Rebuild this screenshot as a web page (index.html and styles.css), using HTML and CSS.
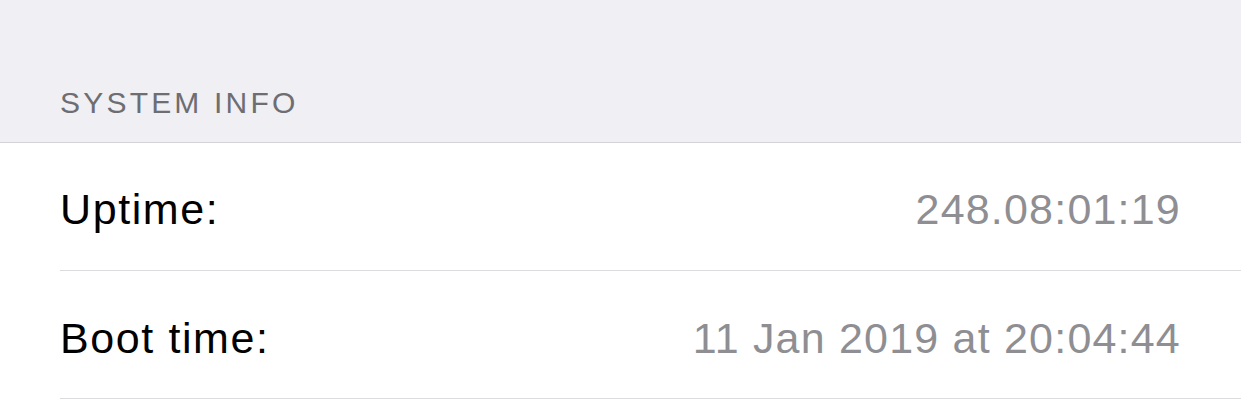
FILE: index.html
```html
<!DOCTYPE html>
<html lang="en">
<head>
<meta charset="utf-8">
<title>System Info</title>
<link rel="stylesheet" href="styles.css">
</head>
<body>
<div class="screen">
  <header class="section-header">
    <span class="section-title">SYSTEM INFO</span>
  </header>
  <ul class="list">
    <li class="row">
      <span class="label">Uptime:</span>
      <span class="value">248.08:01:19</span>
    </li>
    <li class="row">
      <span class="label">Boot time:</span>
      <span class="value">11 Jan 2019 at 20:04:44</span>
    </li>
  </ul>
</div>
</body>
</html>
```
FILE: styles.css
```css
html, body {
  margin: 0;
  padding: 0;
  background: #ffffff;
}

body {
  font-family: "Liberation Sans", Arial, sans-serif;
  width: 1241px;
  height: 404px;
  overflow: hidden;
}

.screen {
  display: flex;
  flex-direction: column;
}

.section-header {
  background: #efeff4;
  border-bottom: 1px solid #d3d3d8;
  display: flex;
  align-items: flex-end;
  padding: 0 0 22px 60px;
  box-sizing: content-box;
  height: 120px;
}

.section-title {
  font-size: 30px;
  letter-spacing: 3.2px;
  color: #6d6d72;
}

.list {
  list-style: none;
  margin: 0 0 0 60px;
  padding: 0;
}

.row {
  border-bottom: 1px solid #dcdcdf;
  display: flex;
  align-items: center;
  justify-content: space-between;
  padding: 6px 60px 0 0;
  box-sizing: border-box;
  height: 128px;
}

.row + .row {
  padding-top: 8px;
}

.label {
  font-size: 43px;
  letter-spacing: 1.6px;
  color: #000000;
}

.value {
  font-size: 43px;
  letter-spacing: 1.2px;
  color: #8e8e93;
}
```
